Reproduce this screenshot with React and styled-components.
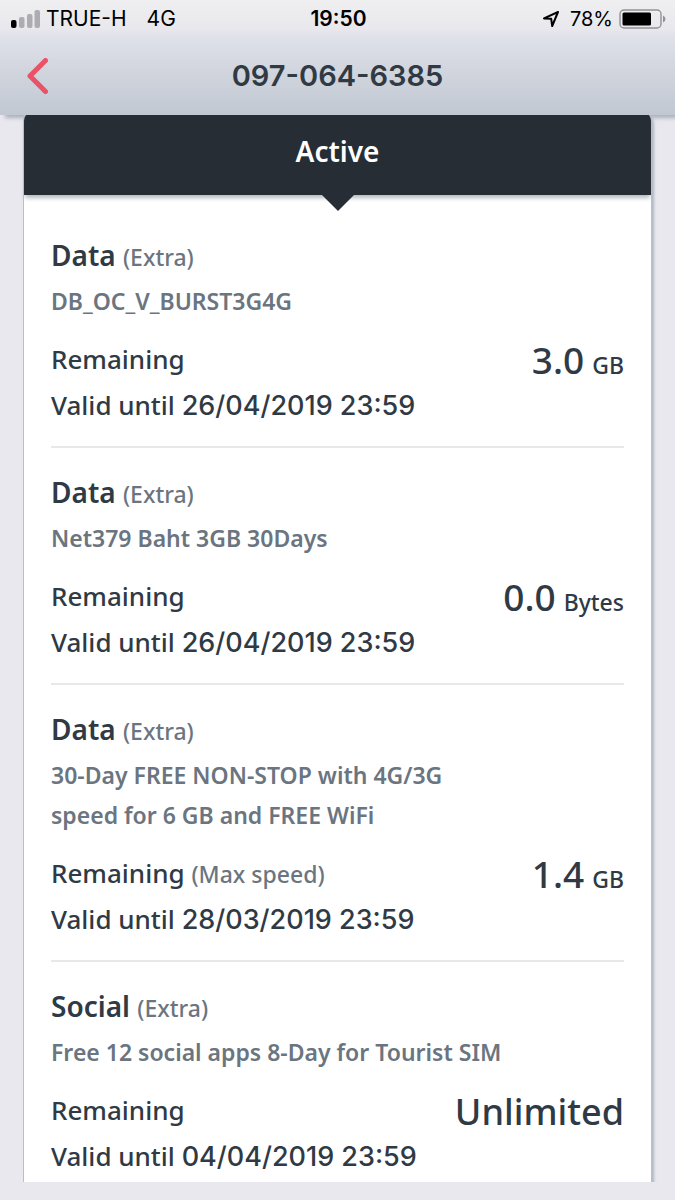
import React from 'react';
import styled, { createGlobalStyle } from 'styled-components';

const GlobalStyle = createGlobalStyle`
  * { box-sizing: border-box; }
  body {
    margin: 0;
    background: #e9e8ee;
    color: #303a44;
    font-family: "Noto Sans", "Open Sans", sans-serif;
  }
  h1, h2, h3, p { margin: 0; }
`;

const Page = styled.div`
  display: flex;
  flex-direction: column;
  height: 100vh;
`;

const TopBar = styled.header`
  flex: none;
  background: linear-gradient(#efeff2 0, #e9e9ed 24%, #dfe1ea 33%, #d0d4dd 64%, #c1c8d2 100%);
  box-shadow: 4px 4px 4px -1px #a9b1bd;
`;

const StatusBar = styled.div`
  display: grid;
  grid-template-columns: 1fr auto 1fr;
  align-items: center;
  height: 38px;
  padding: 0 9px 0 11px;
  color: #000;
  font-family: Inter, sans-serif;
  font-size: 21px;
  line-height: 26px;
`;

const StatusGroup = styled.div`
  display: flex;
  align-items: center;
  justify-content: ${({ $end }) => ($end ? 'flex-end' : 'flex-start')};
  gap: 6px;
`;

const Carrier = styled.span`
  margin-right: 14px;
`;

const BatteryLevel = styled.span`
  margin-left: 4px;
  font-size: 20px;
`;

const Clock = styled.time`
  font-weight: 600;
`;

const NavBar = styled.div`
  display: grid;
  grid-template-columns: 76px 1fr 76px;
  align-items: center;
  height: 77px;
  padding-bottom: 2px;
`;

const BackButton = styled.button`
  display: flex;
  align-items: center;
  justify-content: center;
  height: 60px;
  padding: 0;
  border: 0;
  background: none;
  cursor: pointer;
`;

const PhoneNumber = styled.h1`
  font-family: Inter, sans-serif;
  font-size: 29px;
  font-weight: 600;
  line-height: 40px;
  text-align: center;
`;

const Scroller = styled.main`
  position: relative;
  z-index: 1;
  flex: 1;
  min-height: 0;
  margin-bottom: 18px;
  overflow-y: auto;
  scrollbar-width: none;
`;

const Card = styled.section`
  margin: -4px 24px 0;
  border-radius: 10px;
  background: #fff;
  box-shadow: 0 0 0 1px #b9bfca, 3px 3px 3px #b0b7c2;
`;

const CardHeader = styled.div`
  position: relative;
  height: 84px;
  padding-top: 20px;
  border-radius: 10px 10px 0 0;
  background: #262d35;
  box-shadow: 0 4px 4px -1px #b4bac3;
  color: #fff;
  text-align: center;

  &::after {
    content: "";
    position: absolute;
    top: 100%;
    left: 50%;
    border: 16px solid transparent;
    border-top-color: #262d35;
    border-bottom: 0;
    transform: translateX(-50%);
  }
`;

const CardTitle = styled.h2`
  font-size: 28px;
  font-weight: 600;
  line-height: 40px;
`;

const PackageList = styled.div`
  padding: 16px 27px 0;
`;

const PackageItem = styled.article`
  padding: 24px 0 18px;
  border-bottom: 2px solid #e7e8ea;
`;

const PackageTitle = styled.h3`
  font-size: 28px;
  font-weight: 600;
  line-height: 40px;
`;

const Note = styled.span`
  color: #6b757f;
  font-size: 23px;
  font-weight: 500;
  line-height: 1;
`;

const PackageName = styled.p`
  max-width: 460px;
  margin: 6px 0 15px;
  color: #6b757f;
  font-size: 23px;
  font-weight: 600;
  line-height: 40px;
`;

const Usage = styled.div`
  display: flex;
  justify-content: space-between;
  font-size: 26px;
  font-weight: 500;
  line-height: 46px;
`;

const Expiry = styled.time`
  font-family: Inter, sans-serif;
  font-size: 27px;
  line-height: 1;
`;

const Amount = styled.p`
  font-size: 36px;
  line-height: 50px;
  white-space: nowrap;
`;

const Figure = styled.span`
  font-size: 37px;
  line-height: 1;
`;

const Unit = styled.span`
  margin-left: 8px;
  font-size: 23px;
  line-height: 1;
`;

const packages = [
  { kind: 'Data', name: 'DB_OC_V_BURST3G4G', amount: '3.0', unit: 'GB', until: '26/04/2019 23:59' },
  { kind: 'Data', name: 'Net379 Baht 3GB 30Days', amount: '0.0', unit: 'Bytes', until: '26/04/2019 23:59' },
  {
    kind: 'Data',
    name: '30-Day FREE NON-STOP with 4G/3G speed for 6 GB and FREE WiFi',
    note: '(Max speed)',
    amount: '1.4',
    unit: 'GB',
    until: '28/03/2019 23:59',
  },
  { kind: 'Social', name: 'Free 12 social apps 8-Day for Tourist SIM', amount: 'Unlimited', until: '04/04/2019 23:59' },
];

const SignalIcon = () => (
  <svg width="29" height="19" viewBox="0 0 29 19" aria-hidden="true">
    <rect x="0" y="10" width="5.5" height="8" rx="2" fill="#000" />
    <rect x="8" y="7" width="5.5" height="11" rx="2" fill="#adadb1" />
    <rect x="16" y="4" width="5.5" height="14" rx="2" fill="#adadb1" />
    <rect x="23.5" y="0" width="5.5" height="18" rx="2" fill="#adadb1" />
  </svg>
);

const LocationIcon = () => (
  <svg width="18" height="18" viewBox="0 0 18 18" fill="none" stroke="#000" strokeWidth="2" strokeLinejoin="round" aria-hidden="true">
    <path d="M16 2 L2 8.4 L9.2 8.8 L10.2 16 Z" />
  </svg>
);

const BatteryIcon = () => (
  <svg width="47" height="20" viewBox="0 0 47 20" aria-hidden="true">
    <rect x="1" y="1" width="41" height="18" rx="4" fill="none" stroke="#929297" strokeWidth="1.4" />
    <rect x="3.5" y="3.5" width="28.5" height="13" rx="1.5" fill="#000" />
    <path d="M44 6.5 Q46.5 7.5 46.5 10 Q46.5 12.5 44 13.5 Z" fill="#929297" />
  </svg>
);

const BackIcon = () => (
  <svg width="22" height="36" viewBox="0 0 22 36" fill="none" stroke="#e95267" strokeWidth="5" strokeLinecap="round" strokeLinejoin="round" aria-hidden="true">
    <path d="M18.5 2.5 L3 18 L18.5 33.5" />
  </svg>
);

export default function App() {
  return (
    <>
      <GlobalStyle />
      <Page>
        <TopBar>
          <StatusBar>
            <StatusGroup>
              <SignalIcon />
              <Carrier>TRUE-H</Carrier>
              <span>4G</span>
            </StatusGroup>
            <Clock>19:50</Clock>
            <StatusGroup $end>
              <LocationIcon />
              <BatteryLevel>78%</BatteryLevel>
              <BatteryIcon />
            </StatusGroup>
          </StatusBar>
          <NavBar>
            <BackButton type="button" aria-label="Back">
              <BackIcon />
            </BackButton>
            <PhoneNumber>097-064-6385</PhoneNumber>
          </NavBar>
        </TopBar>
        <Scroller>
          <Card>
            <CardHeader>
              <CardTitle>Active</CardTitle>
            </CardHeader>
            <PackageList>
              {packages.map(({ kind, name, note, amount, unit, until }) => (
                <PackageItem key={name}>
                  <PackageTitle>
                    {kind} <Note>(Extra)</Note>
                  </PackageTitle>
                  <PackageName>{name}</PackageName>
                  <Usage>
                    <div>
                      <p>
                        Remaining {note && <Note>{note}</Note>}
                      </p>
                      <p>
                        Valid until <Expiry>{until}</Expiry>
                      </p>
                    </div>
                    <Amount>
                      {unit ? <Figure>{amount}</Figure> : amount}
                      {unit && <Unit>{unit}</Unit>}
                    </Amount>
                  </Usage>
                </PackageItem>
              ))}
            </PackageList>
          </Card>
        </Scroller>
      </Page>
    </>
  );
}
